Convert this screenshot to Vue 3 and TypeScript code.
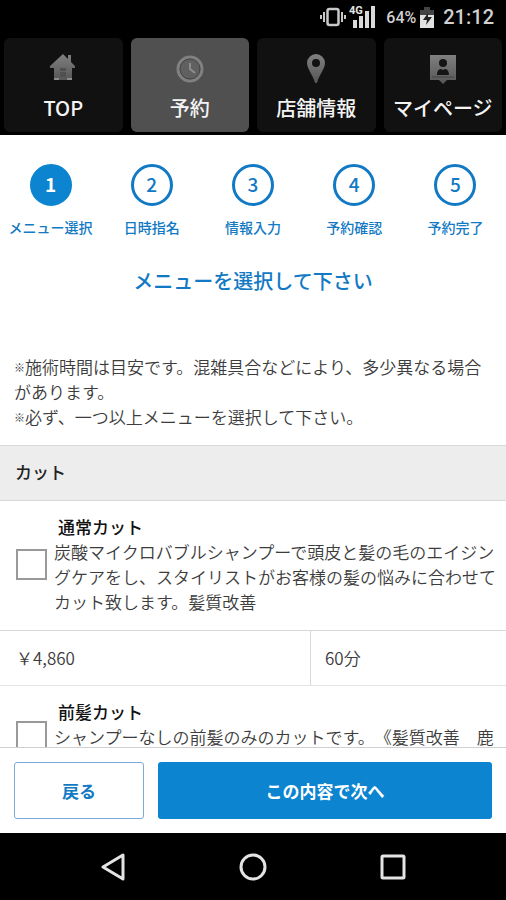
<script setup lang="ts">
import { ref } from 'vue'

interface Tab {
  id: string
  label: string
}

interface MenuItem {
  id: string
  name: string
  description: string
  price: string
  duration: string
}

const tabs: Tab[] = [
  { id: 'top', label: 'TOP' },
  { id: 'reserve', label: '予約' },
  { id: 'shop', label: '店舗情報' },
  { id: 'mypage', label: 'マイページ' },
]
const activeTab = ref('reserve')

const steps: string[] = ['メニュー選択', '日時指名', '情報入力', '予約確認', '予約完了']
const currentStep = ref(1)

const notes: string[] = [
  '施術時間は目安です。混雑具合などにより、多少異なる場合があります。',
  '必ず、一つ以上メニューを選択して下さい。',
]

const items: MenuItem[] = [
  {
    id: 'regular',
    name: '通常カット',
    description:
      '炭酸マイクロバブルシャンプーで頭皮と髪の毛のエイジングケアをし、スタイリストがお客様の髪の悩みに合わせてカット致します。髪質改善',
    price: '￥4,860',
    duration: '60分',
  },
  {
    id: 'bangs',
    name: '前髪カット',
    description: 'シャンプーなしの前髪のみのカットです。《髪質改善　鹿',
    price: '',
    duration: '',
  },
]
const selected = ref<string[]>([])
</script>

<template>
  <div class="screen">
    <div class="status">
      <svg class="vibrate" width="26" height="20" viewBox="0 0 26 20" fill="none" stroke="#c8c8c8">
        <rect x="7.5" y="2" width="11" height="16" rx="2" stroke-width="2.5" />
        <path d="M4 5v10M22 5v10" stroke-width="2" />
        <path d="M1 8v4M25 8v4" stroke-width="2" />
      </svg>
      <svg class="signal" width="27" height="24" viewBox="0 0 27 24">
        <path d="M4 15h4v8H4zM10 11h4v12h-4zM16 6h4v17h-4zM22 1h4v22h-4z" fill="#dadada" />
        <text x="0" y="9" class="network">4G</text>
      </svg>
      <span class="percent">64%</span>
      <svg class="battery" width="14" height="21" viewBox="0 0 14 21">
        <path d="M4 0h6v3h4v6H0V3h4z" fill="#444" />
        <path d="M0 8h14v13H0z" fill="#e2e2e2" />
        <path d="M8 6L3 13h4l-1 5 6-8H8z" fill="#222" />
      </svg>
      <span class="clock">21:12</span>
    </div>

    <nav class="tabs">
      <button
        v-for="tab in tabs"
        :key="tab.id"
        type="button"
        class="tab"
        :class="{ active: tab.id === activeTab }"
        @click="activeTab = tab.id"
      >
        <svg class="tab-icon" width="30" height="32" viewBox="0 0 30 32" aria-hidden="true">
          <defs>
            <linearGradient :id="'shade-' + tab.id" x1="0" y1="0" x2="0" y2="1">
              <stop offset="0" stop-color="#808080" />
              <stop offset="1" stop-color="#565656" />
            </linearGradient>
          </defs>
          <g v-if="tab.id === 'top'">
            <path
              d="M15 2l5 5V3h3v7l4 4v2h-3v12H6V16H2v-2z"
              :fill="'url(#shade-' + tab.id + ')'"
            />
            <path d="M12 16h6v3h-6zM12 20h6v5h-6z" fill="#505050" />
            <path d="M6 27h5M19 27h5" stroke="#8c8c8c" stroke-width="2" />
          </g>
          <g v-else-if="tab.id === 'reserve'">
            <circle cx="15" cy="17" r="12" fill="#606060" stroke="#808080" stroke-width="3" />
            <circle cx="15" cy="17" r="10" fill="none" stroke="#454545" stroke-width="1" />
            <path d="M15 11v6l5 4" fill="none" stroke="#8c8c8c" stroke-width="2" />
          </g>
          <path
            v-else-if="tab.id === 'shop'"
            d="M15 2a9 9 0 0 1 9 9c0 6-6 12-8 20h-2C12 23 6 17 6 11a9 9 0 0 1 9-9zm0 5a4 4 0 1 0 0 8 4 4 0 0 0 0-8z"
            fill-rule="evenodd"
            :fill="'url(#shade-' + tab.id + ')'"
          />
          <g v-else>
            <path d="M2 3h26v25h-9l-4 4-4-4H2z" :fill="'url(#shade-' + tab.id + ')'" />
            <path d="M4 25h22" stroke="#444" stroke-width="1" />
            <circle cx="15" cy="11" r="4" fill="#151515" />
            <path d="M9 23c0-4 2-6 4-6l2 1 2-1c2 0 4 2 4 6z" fill="#151515" />
          </g>
        </svg>
        <span>{{ tab.label }}</span>
      </button>
    </nav>

    <main class="content">
      <ol class="steps">
        <li v-for="(step, index) in steps" :key="step" class="step">
          <span class="number" :class="{ current: index + 1 === currentStep }">{{ index + 1 }}</span>
          <span class="step-label">{{ step }}</span>
        </li>
      </ol>

      <h1 class="title">メニューを選択して下さい</h1>

      <div class="notes">
        <p v-for="note in notes" :key="note"><span class="mark">※</span>{{ note }}</p>
      </div>

      <h2 class="category">カット</h2>

      <section v-for="item in items" :key="item.id" class="item">
        <label class="choice" :for="item.id">
          <input :id="item.id" v-model="selected" type="checkbox" class="check" :value="item.id" />
          <span class="text">
            <strong class="name">{{ item.name }}</strong>
            <span class="description">{{ item.description }}</span>
          </span>
        </label>
        <div v-if="item.price" class="facts">
          <span class="fact">{{ item.price }}</span>
          <span class="fact">{{ item.duration }}</span>
        </div>
      </section>
    </main>

    <footer class="actions">
      <button type="button" class="back">戻る</button>
      <button type="button" class="next">この内容で次へ</button>
    </footer>

    <div class="system">
      <button type="button" class="key" aria-label="Back">
        <svg width="28" height="28" viewBox="0 0 28 28"><path d="M24 2v24L4 14z" /></svg>
      </button>
      <button type="button" class="key" aria-label="Home">
        <svg width="28" height="28" viewBox="0 0 28 28"><circle cx="14" cy="14" r="12" /></svg>
      </button>
      <button type="button" class="key" aria-label="Recent">
        <svg width="28" height="28" viewBox="0 0 28 28">
          <rect x="3" y="3" width="22" height="22" rx="1" />
        </svg>
      </button>
    </div>
  </div>
</template>

<style>
body {
  margin: 0;
  background: #fff;
}
</style>

<style scoped>
.screen {
  display: flex;
  flex-direction: column;
  height: 100vh;
  background: #fff;
  color: #3c3c3c;
  font-family: 'Noto Sans CJK JP', sans-serif;
  font-size: 17px;
  font-weight: 350;
  line-height: 25px;
  text-spacing-trim: space-all;
}

button {
  margin: 0;
  padding: 0;
  border: 0;
  font: inherit;
  cursor: pointer;
}

.status {
  display: flex;
  flex: none;
  align-items: center;
  justify-content: flex-end;
  height: 34px;
  padding-right: 12px;
  background: #000;
  color: #d0d0d0;
  font-family: Roboto, sans-serif;
}

.signal {
  margin: 0 10px 0 3px;
}

.network {
  fill: #e6e6e6;
  stroke: #000;
  stroke-width: 2px;
  paint-order: stroke;
  font-size: 11px;
  font-weight: 700;
}

.percent {
  font-size: 16px;
  font-weight: 500;
}

.battery {
  margin: 0 9px 0 4px;
}

.clock {
  font-size: 20px;
  font-weight: 500;
}

.tabs {
  display: grid;
  flex: none;
  grid-template-columns: repeat(4, 1fr);
  gap: 8px;
  padding: 4px 4px 3px;
  background: #000;
}

.tab {
  display: flex;
  flex-direction: column;
  align-items: center;
  gap: 9px;
  height: 94px;
  padding-top: 14px;
  border-radius: 6px;
  background: #111;
  color: #f4f4f4;
  font-size: 20px;
  font-weight: 500;
  line-height: 30px;
  white-space: nowrap;
}

.tab.active {
  background: #505050;
}

.content {
  flex: 1;
  min-height: 0;
  overflow-y: auto;
  scrollbar-width: none;
}

.steps {
  display: grid;
  grid-template-columns: repeat(5, 1fr);
  margin: 0;
  padding: 29px 0 0;
  list-style: none;
}

.step {
  display: flex;
  flex-direction: column;
  align-items: center;
  gap: 10px;
  color: #1279c4;
}

.number {
  box-sizing: border-box;
  width: 42px;
  height: 42px;
  border: 3px solid #1279c4;
  border-radius: 50%;
  font-size: 19px;
  font-weight: 500;
  line-height: 33px;
  text-align: center;
}

.number.current {
  border-color: #0c84d0;
  background: #0c84d0;
  color: #fff;
  font-weight: 700;
}

.step-label {
  font-size: 14px;
  font-weight: 500;
  line-height: 23px;
  white-space: nowrap;
}

.title {
  margin: 27px 0 0;
  color: #1279c4;
  font-size: 20px;
  font-weight: 500;
  line-height: 30px;
  text-align: center;
}

.notes {
  padding: 58px 14px 16px;
}

.notes p {
  margin: 0;
}

.mark {
  font-size: 11px;
  vertical-align: 2px;
  line-height: 1;
}

.category {
  margin: 0;
  padding: 13px 15px 16px;
  border-top: 1px solid #d8d8d8;
  border-bottom: 1px solid #d8d8d8;
  background: #ededed;
  color: #222;
  font-size: 17px;
  font-weight: 500;
}

.choice {
  display: flex;
  align-items: center;
  gap: 7px;
  padding: 13px 8px 16px 16px;
}

.check {
  appearance: none;
  box-sizing: border-box;
  flex: none;
  width: 31px;
  height: 31px;
  margin: 0;
  border: 2px solid #999;
  background: #fff;
}

.check:checked {
  background: #0c84d0;
}

.text {
  flex: 1;
}

.name {
  display: block;
  padding-left: 4px;
  color: #111;
  font-weight: 500;
}

.description {
  display: block;
  min-height: 50px;
}

.facts {
  display: grid;
  grid-template-columns: 310fr 196fr;
  border-top: 1px solid #d8d8d8;
  border-bottom: 1px solid #e4e4e4;
}

.fact {
  padding: 14px 14px 15px 16px;
}

.fact + .fact {
  padding-left: 14px;
  border-left: 1px solid #d8d8d8;
}

.actions {
  display: grid;
  flex: none;
  grid-template-columns: 130fr 334fr;
  gap: 14px;
  padding: 14px;
  border-top: 1px solid #d0d0d0;
  background: #fff;
}

.back,
.next {
  height: 57px;
  border-radius: 3px;
  font-weight: 700;
}

.back {
  border: 1px solid #7fa9da;
  background: #fff;
  color: #1279c4;
}

.next {
  background: #0c84d0;
  color: #fff;
}

.system {
  display: flex;
  flex: none;
  align-items: center;
  justify-content: center;
  gap: 112px;
  height: 67px;
  background: #000;
}

.key {
  display: flex;
  background: none;
}

.key svg {
  fill: none;
  stroke: #e4e4e4;
  stroke-width: 3px;
  stroke-linejoin: round;
}
</style>
